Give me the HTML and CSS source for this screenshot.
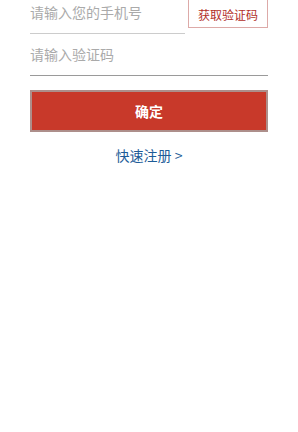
FILE: index.html
```html
<!DOCTYPE html>
<html lang="zh-CN">
<head>
    <meta charset="UTF-8">
    <meta name="viewport" content="width=device-width, initial-scale=1.0">
    <title>登录</title>
    <link rel="stylesheet" href="styles.css">
</head>
<body>
    <div class="login-form">
        <div class="phone-row">
            <input class="field phone-field" type="tel" placeholder="请输入您的手机号">
            <button class="code-button">获取验证码</button>
        </div>
        <div class="code-row">
            <input class="field code-field" type="text" placeholder="请输入验证码">
        </div>
        <button class="submit-button">确定</button>
        <a class="register-link" href="#">快速注册 &gt;</a>
    </div>
</body>
</html>
```

FILE: styles.css
```css
body {
    margin: 0;
    background: #fff;
    font-family: 'Noto Sans CJK SC', 'Noto Sans', sans-serif;
}
.login-form {
    display: flex;
    flex-direction: column;
    padding: 0 30px;
}
.phone-row {
    display: flex;
    align-items: flex-start;
}
.field {
    box-sizing: border-box;
    border: none;
    outline: none;
    padding: 0;
    font-family: inherit;
    font-size: 14px;
    color: #333;
    background: transparent;
}
.field::placeholder {
    color: #aaa;
}
.phone-field {
    width: 155px;
    height: 34px;
    padding-bottom: 9px;
    border-bottom: 1px solid #ccc;
}
.code-button {
    box-sizing: border-box;
    width: 80px;
    height: 31px;
    margin: -3px 0 0 3px;
    border: 1px solid #ddaaa8;
    background: #fff;
    color: #b2302a;
    font-family: inherit;
    font-size: 12px;
    padding: 3px 0 0;
}
.code-row {
    display: flex;
}
.code-field {
    width: 100%;
    height: 42px;
    padding-bottom: 2px;
    border-bottom: 1px solid #9a9a9a;
}
.submit-button {
    box-sizing: border-box;
    height: 42px;
    margin-top: 14px;
    border: 2px solid #ad8f8b;
    background: #c8392a;
    color: #fff;
    font-family: inherit;
    font-size: 14px;
    font-weight: bold;
}
.register-link {
    margin-top: 13px;
    line-height: 20px;
    text-align: center;
    color: #1d5c98;
    font-size: 14px;
    text-decoration: none;
}
```
